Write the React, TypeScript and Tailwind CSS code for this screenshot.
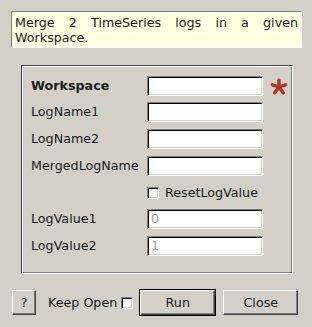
import React from "react";

const sunken =
  "border border-t-[#808080] border-l-[#808080] border-b-white border-r-white shadow-[inset_1px_1px_0_#000,inset_-1px_-1px_0_#d4d0c8] bg-white";
const raised =
  "border border-t-white border-l-white border-b-[#404040] border-r-[#404040] shadow-[inset_-1px_-1px_0_#808080] bg-[#d4d0c8]";

const Star = () => (
  <svg width="18" height="17" viewBox="0 0 18 17" className="ml-[7px]">
    <g stroke="#b3362b" strokeWidth="3.4" strokeLinecap="round">
      <line x1="9" y1="9" x2="9" y2="2.2" />
      <line x1="9" y1="9" x2="2.4" y2="6.8" />
      <line x1="9" y1="9" x2="15.6" y2="6.8" />
      <line x1="9" y1="9" x2="4.8" y2="14.8" />
      <line x1="9" y1="9" x2="13.2" y2="14.8" />
    </g>
  </svg>
);

const Field = ({
  label,
  bold,
  value,
  star,
  className,
}: {
  label: string;
  bold?: boolean;
  value?: string;
  star?: boolean;
  className?: string;
}) => (
  <div className={`flex items-center h-[20px] ${className ?? ""}`}>
    <div className={`w-[116px] shrink-0 ${bold ? "font-bold" : ""}`}>{label}</div>
    <div className={`w-[116px] h-[20px] ${sunken} flex items-center pl-[3px] text-[#a0a0a0]`}>
      {value}
    </div>
    {star && <Star />}
  </div>
);

const Check = () => (
  <div className={`w-[12px] h-[12px] ${sunken}`} />
);

export default function App() {
  return (
    <div
      className="w-[312px] h-[327px] bg-[#d4d0c8] text-[12.7px] text-[#1a1a1a] flex flex-col pt-[11px]"
      style={{ fontFamily: '"DejaVu Sans", sans-serif' }}
    >
      <div className="ml-[11px] w-[291px] h-[37px] bg-[#ffffe1] border border-t-[#808080] border-l-[#808080] border-b-white border-r-white px-[3px] pt-[3px] leading-[15px]">
        <div className="text-justify [text-align-last:justify]">Merge 2 TimeSeries logs in a given</div>
        <div>Workspace.</div>
      </div>

      <div className="ml-[21px] mt-[17px] w-[272px] h-[209px] border border-t-[#404040] border-l-[#404040] border-b-white border-r-white shadow-[inset_1px_1px_0_#fff,inset_-1px_-1px_0_#808080] pl-[9px] pt-[10px]">
        <Field label="Workspace" bold star />
        <Field label="LogName1" className="mt-[6px]" />
        <Field label="LogName2" className="mt-[7px]" />
        <Field label="MergedLogName" className="mt-[7px]" />
        <div className="flex items-center h-[21px] mt-[6px] pl-[116px]">
          <Check />
          <span className="ml-[6px]">ResetLogValue</span>
        </div>
        <Field label="LogValue1" value="0" className="mt-[6px]" />
        <Field label="LogValue2" value="1" className="mt-[7px]" />
      </div>

      <div className="flex items-center mt-[15px] ml-[12px]">
        <button className={`w-[24px] h-[25px] ${raised}`}>?</button>
        <span className="ml-[12px]">Keep Open</span>
        <div className="ml-[4px]">
          <Check />
        </div>
        <div className="ml-[6px] border border-black">
          <button className={`w-[75px] h-[25px] ${raised} block`}>Run</button>
        </div>
        <button className={`ml-[7px] w-[75px] h-[25px] ${raised}`}>Close</button>
      </div>
    </div>
  );
}
